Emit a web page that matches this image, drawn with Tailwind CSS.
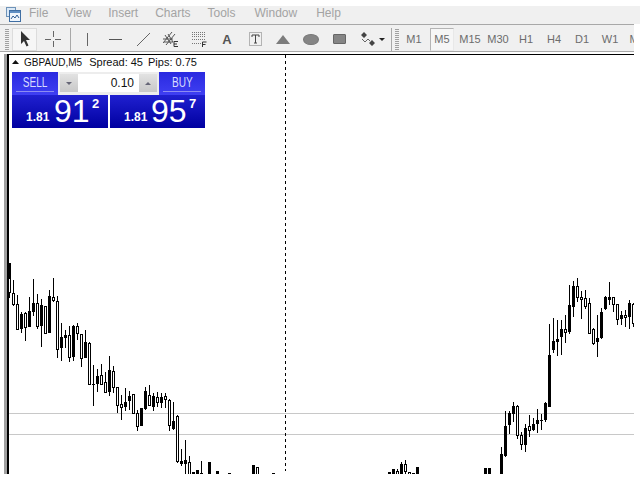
<!DOCTYPE html>
<html lang="en">
<head>
<meta charset="UTF-8">
<title>GBPAUD,M5</title>
<script src="https://cdn.jsdelivr.net/npm/@tailwindcss/browser@4"></script>
</head>
<body class="w-[640px] h-[480px] overflow-hidden bg-white font-['Liberation_Sans',sans-serif]">
<!-- menu -->
<div class="mt-[6px] h-[18px] bg-[#f0f0f0] flex items-start">
  <svg class="mt-[1px] ml-[6px] w-[15px] h-[15px]" viewBox="0 0 15 15">
    <rect x="0.5" y="0.5" width="9" height="9" fill="#dbe9f7" stroke="#6f93b8"/>
    <rect x="3.5" y="3.5" width="11" height="11" fill="#eef5fc" stroke="#3f6ea3"/>
    <rect x="4" y="4" width="10" height="2" fill="#5f8fc4"/>
    <path d="M5 12l2-3 2 2 2-3 2 3" fill="none" stroke="#2f5d94"/>
  </svg>
  <div class="ml-[8px] flex gap-[17px] text-[12px] leading-[14px] text-[#a3a3a3]">
    <span>File</span><span>View</span><span>Insert</span><span>Charts</span><span>Tools</span><span class="ml-[2px]">Window</span><span class="ml-[2px]">Help</span>
  </div>
</div>
<!-- toolbar -->
<div class="w-[634px] h-[28px] pt-[2px] overflow-hidden bg-[#f0f0f0] border-y border-[#a8a8a8] flex items-center [&>*]:shrink-0">
  <div class="ml-[5px] mr-[3px] w-[4px] h-[21px] bg-[repeating-linear-gradient(#a0a0a0_0_1px,transparent_1px_2px)]"></div>
  <div class="w-[25px] h-[23px] border border-[#dcdcdc] bg-[#f6f6f6] flex items-center justify-center">
    <svg class="w-[10px] h-[16px]" viewBox="0 0 10 16"><path d="M1 0v13l3-3 2.500 5.500 2-1L6 9h4z" fill="#333"/></svg>
  </div>
  <div class="ml-[3px] w-[25px] flex justify-center">
    <svg class="w-[16px] h-[16px]" viewBox="0 0 16 16"><path d="M0 8.500h6M10 8.500h6M8.500 0v6M8.500 10v6" stroke="#666"/></svg>
  </div>
  <div class="ml-[5px] mr-[2px] w-px h-[23px] bg-[#a8a8a8]"></div>
  <div class="w-[28px] flex justify-center"><div class="w-px h-[13px] bg-[#666]"></div></div>
  <div class="w-[28px] flex justify-center"><div class="w-[13px] h-px bg-[#555]"></div></div>
  <div class="w-[28px] flex justify-center">
    <svg class="w-[13px] h-[13px]" viewBox="0 0 13 13"><path d="M0 13L13 0" stroke="#666"/></svg>
  </div>
  <div class="w-[28px] flex justify-center">
    <svg class="w-[16px] h-[17px]" viewBox="0 0 16 17"><path d="M0 12L9 1M3 14L12 3M2 4l6 9M5 3l5 8M0 8h10M1 11h9" stroke="#555" fill="none"/><path d="M11 10.500h4M11 10.500v5h4M11 13h3" stroke="#333" fill="none"/></svg>
  </div>
  <div class="w-[28px] flex justify-center">
    <svg class="w-[16px] h-[15px]" viewBox="0 0 16 15"><path d="M1 .5h13M1 2.500h13M1 4.500h13M1 7.500h13M1 11.500h9" stroke="#777" stroke-dasharray="1 1" fill="none"/><path d="M11.500 15v-5h4M11.500 12.500h3" stroke="#333" fill="none"/></svg>
  </div>
  <div class="w-[28px] text-center text-[13px] leading-none font-bold text-[#555]">A</div>
  <div class="w-[28px] flex justify-center">
    <svg class="w-[13px] h-[14px]" viewBox="0 0 13 14"><rect x=".5" y=".5" width="12" height="13" fill="none" stroke="#777" stroke-dasharray="1 1"/><path d="M3 3h7v2M3 3v2M6.500 3v8M5 11h3" stroke="#444" fill="none"/></svg>
  </div>
  <div class="w-[28px] flex justify-center">
    <svg class="w-[14px] h-[9px]" viewBox="0 0 14 9"><path d="M7 0l7 9H0z" fill="#7c7c7c"/></svg>
  </div>
  <div class="w-[28px] flex justify-center">
    <div class="w-[16px] h-[11px] rounded-[50%] bg-[#858585] border border-[#777]"></div>
  </div>
  <div class="w-[28px] flex justify-center">
    <div class="w-[13px] h-[10px] rounded-[1px] bg-[#858585] border border-[#666]"></div>
  </div>
  <div class="w-[38px] flex items-center pl-[7px]">
    <svg class="w-[16px] h-[14px]" viewBox="0 0 16 14"><path d="M4 0l3 3-3 3-3-3zM12 8l3 3-3 3-3-3z" fill="#444"/><path d="M2 7l3 3 3-3 2 2" stroke="#666" fill="none"/></svg>
    <svg class="ml-[3px] w-[6px] h-[3px]" viewBox="0 0 6 3"><path d="M0 0h6L3 3z" fill="#222"/></svg>
  </div>
  <div class="w-px h-[23px] bg-[#a8a8a8]"></div>
  <div class="ml-[3px] w-[4px] h-[21px] bg-[repeating-linear-gradient(#a0a0a0_0_1px,transparent_1px_2px)]"></div>
  <div class="ml-[1px] flex text-[11px] text-[#6c6c6c] text-center leading-[23px] [&>*]:shrink-0">
    <span class="w-[28px]">M1</span>
    <span class="mx-[2px] w-[24px] h-[23px] border border-[#b4b4b4] border-r-[#e8e8e8] border-b-[#e8e8e8] bg-[#f6f6f6] leading-[21px]">M5</span>
    <span class="w-[28px]">M15</span><span class="w-[28px]">M30</span><span class="w-[28px]">H1</span><span class="w-[28px]">H4</span><span class="w-[28px]">D1</span><span class="w-[28px]">W1</span><span class="w-[28px]">MN</span>
  </div>
</div>
<!-- chart window -->
<div class="w-[634px] h-[422px] flex border-t-2 border-white">
  <div class="ml-[4px] w-[3px] bg-[#a0a0a0]"></div>
  <div class="w-[2px] bg-black"></div>
  <div class="relative flex-1 border-t border-black">
    <svg id="chart" class="block w-[625px] h-[419px]" viewBox="9 55 625 419" shape-rendering="crispEdges"></svg>
    <div class="absolute left-[3px] top-0 h-[14px] flex items-center text-[11px] text-[#111]">
      <svg class="w-[7px] h-[4px]" viewBox="0 0 7 4"><path d="M3.500 0L7 4H0z" fill="#111"/></svg>
      <span class="ml-[5px] text-[10px]">GBPAUD,M5</span><span class="ml-[7px]">Spread: 45</span><span class="ml-[5px]">Pips: 0.75</span>
    </div>
    <!-- one click trading panel -->
    <div class="absolute left-[3px] top-[17px] w-[193px] text-white">
      <div class="flex h-[23px]">
        <div class="w-[46px] pt-[2px] bg-[linear-gradient(#2a2ae0,#3f3ff2)] text-[14px] text-center text-[#d8dcff] leading-[17px]">
          <span class="inline-block scale-x-[.72]">SELL</span>
          <div class="mx-[4px] h-px bg-[#8c8cf0]"></div>
        </div>
        <div class="w-[101px] pt-[2px] px-[2px] pb-[3px] bg-[#ededed] flex items-center text-[#111] text-[12px]">
          <div class="w-[18px] h-full bg-[linear-gradient(#e2e2e2,#c8c8c8)] flex items-center justify-center"><svg class="w-[6px] h-[3px]" viewBox="0 0 6 3"><path d="M0 0h6L3 3z" fill="#667"/></svg></div>
          <div class="flex-1 h-full bg-white text-right pr-[5px] leading-[18px]">0.10</div>
          <div class="w-[18px] h-full bg-[linear-gradient(#e2e2e2,#c8c8c8)] flex items-center justify-center"><svg class="w-[6px] h-[3px]" viewBox="0 0 6 3"><path d="M3 0l3 3H0z" fill="#667"/></svg></div>
        </div>
        <div class="w-[46px] pt-[2px] bg-[linear-gradient(#2a2ae0,#3f3ff2)] text-[14px] text-center text-[#d8dcff] leading-[17px]">
          <span class="inline-block scale-x-[.72]">BUY</span>
          <div class="mx-[4px] h-px bg-[#8c8cf0]"></div>
        </div>
      </div>
      <div class="flex gap-[2px] h-[33px]">
        <div class="relative w-[96px] bg-[linear-gradient(#2020d0,#0000a0)]">
          <span class="absolute left-[14px] top-[15px] text-[12px] leading-[15px] font-bold">1.81</span>
          <span class="absolute left-[42px] top-0 text-[32px] leading-[32px]">91</span>
          <span class="absolute left-[80px] top-[1px] text-[13px] leading-[15px] font-bold">2</span>
        </div>
        <div class="relative w-[95px] bg-[linear-gradient(#2020d0,#0000a0)]">
          <span class="absolute left-[14px] top-[15px] text-[12px] leading-[15px] font-bold">1.81</span>
          <span class="absolute left-[41px] top-0 text-[32px] leading-[32px]">95</span>
          <span class="absolute left-[79px] top-[1px] text-[13px] leading-[15px] font-bold">7</span>
        </div>
      </div>
    </div>
  </div>
</div>
<script>
  // x, wick top, wick bottom, body top, body bottom, filled (page pixels)
  const z = (ox, oy, rows) => rows.map(r => [ox + r[0] / 3, oy + r[1] / 3, oy + r[2] / 3, oy + r[3] / 3, oy + r[4] / 3, r[5]]);
  const candles = [
    ...z(0, 255, [[28,25,70,25,70,1],[28,70,128,70,112,0],[40,75,152,115,147,0],[52,120,225,148,223,0],[64,170,233,178,223,1],[76,172,257,175,215,0],[88,127,215,168,215,1],[100,72,182,145,170,1],[112,118,222,145,212,0],[124,132,275,150,212,1],[136,152,235,153,235,0],[148,105,235,124,235,1],[160,70,140,127,134,0],[172,122,308,139,283,0],[184,205,317,247,278,1],[196,225,280,240,250,1],[208,213,322,240,305,0],[220,210,318,213,305,1],[232,205,255,213,235,0],[244,237,335,238,310,0],[256,225,310,262,308,1],[268,262,388,265,388,0],[280,330,452,387,389,1],[292,342,410,363,388,1],[304,328,390,360,388,0],[316,350,415,381,410,0],[328,303,422,345,410,1],[340,332,415,349,397,0],[352,395,475,397,450,0],[364,420,495,447,455,0],[376,400,468,441,455,1],[388,408,465,423,437,1],[400,418,478,418,473,0],[412,465,527,475,512,0],[424,460,512,460,512,1],[436,395,465,408,463,1],[448,390,450,420,450,0]]),
    ...z(150, 380, [[10,40,93,47,80,1],[22,35,80,52,65,0],[34,40,85,52,68,1],[46,38,85,48,58,0],[58,58,152,60,136,0],[70,65,150,123,147,1],[82,105,250,108,244,0],[94,207,257,243,252,1],[106,180,282,240,252,1],[118,228,282,246,282,0],[130,276,282,276,282,1],[142,270,282,270,282,1],[154,243,282,279,282,1],[178,246,282,246,282,1],[202,273,282,273,282,1],[238,279,282,279,282,1],[310,255,282,255,282,1],[322,261,282,261,282,0],[370,279,282,279,282,1]]),
    ...z(380, 380, [[28,275,282,275,282,1],[40,268,282,268,282,1],[52,268,282,272,282,0],[64,247,282,252,282,1],[76,240,282,253,272,0],[88,277,282,277,282,0],[100,279,282,279,282,1],[112,261,282,261,282,1],[316,265,282,265,282,1],[328,265,282,265,282,1],[364,200,282,222,282,1],[376,93,232,138,228,1],[388,93,162,99,135,1],[400,67,126,78,102,1],[412,75,177,78,166,0],[424,156,210,165,192,0],[436,132,216,144,195,1],[448,105,171,138,150,0],[460,114,153,132,150,1],[472,87,159,120,132,1],[484,102,150,119,121,1],[496,66,126,68,120,1]]),
    ...z(540, 270, [[28,162,411,255,411,1],[40,145,250,213,240,1],[52,150,258,208,216,1],[64,150,255,178,200,1],[76,135,218,178,185,0],[88,45,192,105,185,1],[100,33,140,48,110,1],[112,25,97,48,82,0],[124,62,147,80,88,0],[136,60,118,85,107,0],[148,85,192,98,190,0],[160,175,225,178,218,0],[172,135,262,205,215,1],[184,115,207,127,205,1],[196,78,120,80,117,1],[208,37,105,82,90,1],[220,80,125,82,103,0],[232,103,165,103,148,0],[244,124,165,136,146,1],[256,120,170,136,142,0],[268,90,178,100,142,1],[280,100,170,103,160,0]]),
  ];
  let s = '<path d="M9 413.500H634M9 434.500H634" stroke="#c8c8c8"/>';
  s += '<path d="M285.500 55V471" stroke="#000" stroke-dasharray="3 3"/>';
  for (const c of candles) {
    const x = Math.floor(c[0]), t = Math.round(c[1]), b = Math.round(c[2]), bt = Math.round(c[3]), bb = Math.max(Math.round(c[4]), bt + 1);
    s += `<rect x="${x}" y="${t}" width="1" height="${b - t}" fill="#000"/>`;
    if (c[5]) s += `<rect x="${x - 1}" y="${bt}" width="3" height="${bb - bt}" fill="#000"/>`;
    else s += `<rect x="${x - 0.5}" y="${bt + 0.5}" width="2" height="${bb - bt}" fill="#fff" stroke="#000"/>`;
  }
  document.getElementById('chart').innerHTML = s;
</script>
</body>
</html>
